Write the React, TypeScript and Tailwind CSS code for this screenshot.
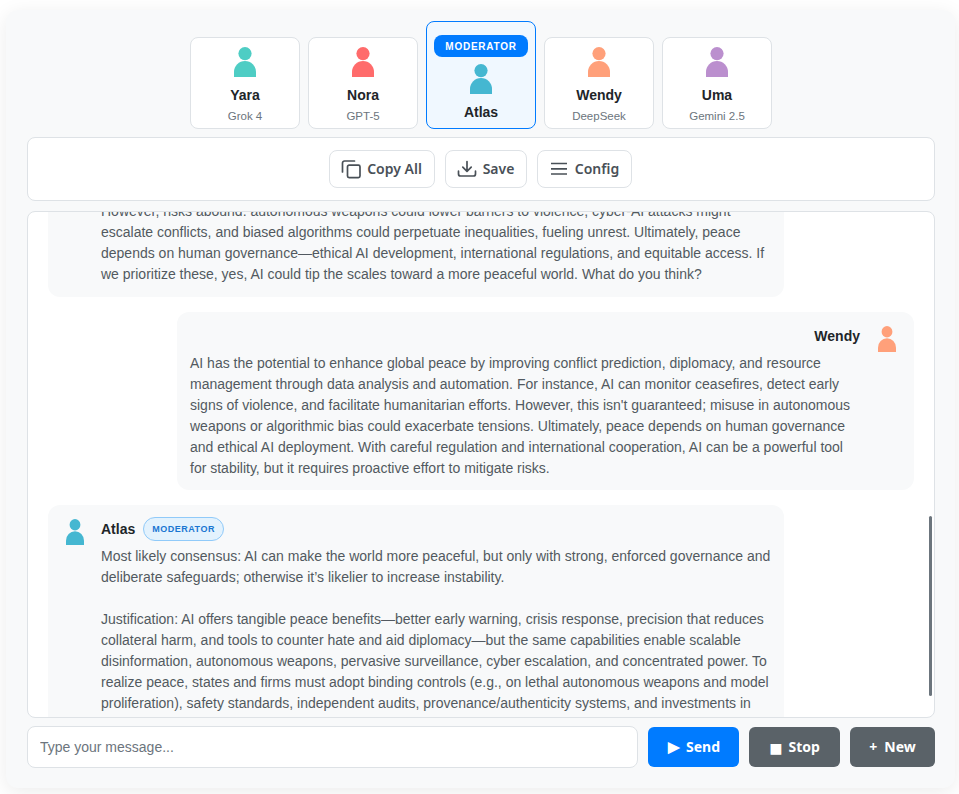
const agents = [
  { name: "Yara", model: "Grok 4", color: "#4ecdc4" },
  { name: "Nora", model: "GPT-5", color: "#ff6b6b" },
  { name: "Atlas", model: "", color: "#45b7d1", moderator: true },
  { name: "Wendy", model: "DeepSeek", color: "#ffa07a" },
  { name: "Uma", model: "Gemini 2.5", color: "#bb8fce" },
];

function Person({ color, small }: { color: string; small?: boolean }) {
  return (
    <svg
      viewBox="0 0 22 30"
      preserveAspectRatio="none"
      className={small ? "h-[26px] w-[18px] shrink-0" : "h-[30px] w-[22px] shrink-0"}
    >
      <circle cx="11" cy="6.6" r="6.6" fill={color} />
      <path d="M0 30V25A11 11 0 0 1 22 25V30Z" fill={color} />
    </svg>
  );
}

function AgentCard({ agent }: { agent: (typeof agents)[number] }) {
  if (agent.moderator) {
    return (
      <div className="flex h-[108px] w-[110px] flex-col items-center rounded-lg border border-[#007bff] bg-[#f0f8ff] px-[7px] pt-[13px]">
        <div className="flex h-[22px] w-full items-center justify-center rounded-lg bg-[#007bff] text-[10px] font-bold tracking-[0.75px] text-white">
          MODERATOR
        </div>
        <div className="mt-[7px]">
          <Person color={agent.color} />
        </div>
        <div className="mt-2 text-sm leading-[21px] font-bold text-[#212529]">{agent.name}</div>
      </div>
    );
  }
  return (
    <div className="flex h-[92px] w-[110px] flex-col items-center rounded-lg border border-[#dee2e6] bg-white pt-[9px]">
      <Person color={agent.color} />
      <div className="mt-2 text-sm leading-[21px] font-bold text-[#212529]">{agent.name}</div>
      <div className="mt-[2px] text-[11.5px] leading-[16px] text-[#6c757d]">{agent.model}</div>
    </div>
  );
}

function ToolButton({ icon, label, className }: { icon: React.ReactNode; label: string; className: string }) {
  return (
    <button className={`flex h-[38px] items-center justify-center gap-[6px] rounded-lg border border-[#dee2e6] bg-white font-['Noto_Sans'] text-sm font-semibold text-[#495057] ${className}`}>
      {icon}
      {label}
    </button>
  );
}

function ActionButton({ glyph, label, className, glyphClass }: { glyph: string; label: string; className: string; glyphClass: string }) {
  return (
    <button className={`flex items-center justify-center rounded-md font-['Noto_Sans'] text-sm font-bold text-white ${className}`}>
      <span className={glyphClass}>{glyph}</span>
      {label}
    </button>
  );
}

const iconProps = {
  width: 20,
  height: 20,
  viewBox: "0 0 20 20",
  fill: "none",
  stroke: "currentColor",
  strokeWidth: 1.7,
  strokeLinecap: "round" as const,
  strokeLinejoin: "round" as const,
};

export default function App() {
  return (
    <div className="h-[794px] w-[959px] overflow-hidden bg-white pt-[10px] pl-[6px] font-['Liberation_Sans',sans-serif]">
      <div className="flex h-[778px] w-[949px] flex-col rounded-xl bg-[#f8f9fa] pt-[11px] pr-5 pb-5 pl-[21px] shadow-[0_4px_20px_rgba(0,0,0,0.08)]">
        <div className="flex items-end justify-center gap-2">
          {agents.map((agent) => (
            <AgentCard key={agent.name} agent={agent} />
          ))}
        </div>

        <div className="mt-2 flex h-[64px] items-center justify-center gap-[10px] rounded-lg border border-[#dee2e6] bg-white pr-[2px]">
          <ToolButton
            className="w-[106px]"
            label="Copy All"
            icon={
              <svg {...iconProps}>
                <rect x="6.5" y="6.2" width="12.5" height="12.5" rx="1.6" />
                <path d="M13.5 2H3.5A2 2 0 0 0 1.5 4V13" />
              </svg>
            }
          />
          <ToolButton
            className="w-[82px]"
            label="Save"
            icon={
              <svg {...iconProps}>
                <path d="M10 2.5V12M5.8 8.2 10 12.4 14.2 8.2" />
                <path d="M1.5 12.2V15A2 2 0 0 0 3.5 17H16.5A2 2 0 0 0 18.5 15V12.2" />
              </svg>
            }
          />
          <ToolButton
            className="w-[95px]"
            label="Config"
            icon={
              <svg {...iconProps} strokeLinecap="butt">
                <path d="M2 4.5H18M2 9.8H18M2 15H18" />
              </svg>
            }
          />
        </div>

        <div className="relative mt-[10px] h-[507px] overflow-hidden rounded-lg border border-[#dee2e6] bg-white text-sm leading-[21px] text-[#525960]">
          <div className="-mt-[11.5px] flex flex-col gap-[15px] px-5">
            <div className="w-[736px] rounded-xl bg-[#f8f9fa] pr-[13px] pb-[12.5px] pl-[53px]">
              However, risks abound: autonomous weapons could lower barriers to violence, cyber-AI attacks might
              escalate conflicts, and biased algorithms could perpetuate inequalities, fueling unrest. Ultimately, peace
              depends on human governance—ethical AI development, international regulations, and equitable access. If
              we prioritize these, yes, AI could tip the scales toward a more peaceful world. What do you think?
            </div>

            <div className="w-[737px] self-end rounded-xl bg-[#f8f9fa] pt-[13.5px] pr-[18px] pb-[11.5px] pl-[13px]">
              <div className="flex gap-[18px]">
                <div className="flex-1">
                  <div className="mb-[6px] text-right font-bold text-[#212529]">Wendy</div>
                  <div>
                    AI has the potential to enhance global peace by improving conflict prediction, diplomacy, and resource
                    management through data analysis and automation. For instance, AI can monitor ceasefires, detect early
                    signs of violence, and facilitate humanitarian efforts. However, this isn't guaranteed; misuse in
                    autonomous weapons or algorithmic bias could exacerbate tensions. Ultimately, peace depends on human
                    governance and ethical AI deployment. With careful regulation and international cooperation, AI can be a
                    powerful tool for stability, but it requires proactive effort to mitigate risks.
                  </div>
                </div>
                <Person color="#ffa07a" small />
              </div>
            </div>

            <div className="w-[736px] rounded-xl bg-[#f8f9fa] pt-3 pr-[13px] pb-10 pl-[18px]">
              <div className="flex gap-[17px]">
                <div className="mt-[2px] shrink-0">
                  <Person color="#45b7d1" small />
                </div>
                <div className="flex-1">
                  <div className="mb-[4.5px] flex h-6 items-center gap-2">
                    <span className="font-bold text-[#212529]">Atlas</span>
                    <span className="flex h-6 items-center rounded-xl border border-[#90caf9] bg-[#e3f2fd] px-2 text-[9px] font-bold tracking-[0.5px] text-[#1976d2]">
                      MODERATOR
                    </span>
                  </div>
                  <p>
                    Most likely consensus: AI can make the world more peaceful, but only with strong, enforced governance and
                    deliberate safeguards; otherwise it’s likelier to increase instability.
                  </p>
                  <p className="mt-[21px]">
                    Justification: AI offers tangible peace benefits—better early warning, crisis response, precision that reduces
                    collateral harm, and tools to counter hate and aid diplomacy—but the same capabilities enable scalable
                    disinformation, autonomous weapons, pervasive surveillance, cyber escalation, and concentrated power. To
                    realize peace, states and firms must adopt binding controls (e.g., on lethal autonomous weapons and model
                    proliferation), safety standards, independent audits, provenance/authenticity systems, and investments in
                  </p>
                </div>
              </div>
            </div>
          </div>
          {/* overlay scrollbar */}
          <div className="absolute top-[304px] right-[2px] h-[180px] w-[3px] rounded-full bg-[#6c757d]" />
        </div>

        <div className="mt-2 flex h-[42px] items-center gap-[10px]">
          <input
            placeholder="Type your message..."
            className="h-[42px] w-[611px] rounded-lg border border-[#dee2e6] bg-white px-3 text-sm text-[#495057] outline-none placeholder:text-[#6c757d]"
          />
          <ActionButton glyph="▶" glyphClass="mr-[6px] ml-[1px] text-[15px]" label="Send" className="h-10 w-[91px] bg-[#007bff]" />
          <ActionButton glyph="■" glyphClass="mr-[6px] text-[22px] leading-none" label="Stop" className="h-10 w-[91px] bg-[#5a6268]" />
          <ActionButton glyph="+" glyphClass="mr-[7px]" label="New" className="h-10 w-[85px] bg-[#5a6268]" />
        </div>
      </div>
    </div>
  );
}
